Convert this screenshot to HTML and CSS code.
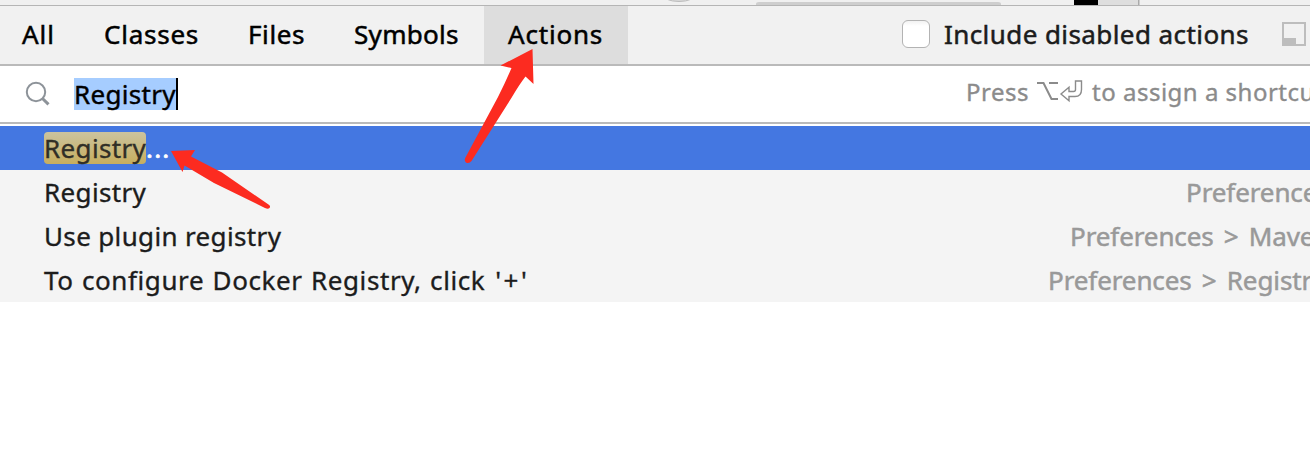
FILE: index.html
```html
<!DOCTYPE html>
<html lang="en">
<head>
<meta charset="utf-8">
<title>Search Everywhere</title>
<link rel="stylesheet" href="styles.css">
</head>
<body>
<div class="window">
  <svg class="backdrop" width="1310" height="5" viewBox="0 0 1310 5">
    <ellipse cx="679" cy="-6" rx="17" ry="7.5" fill="#d8d8d8" stroke="#bcbcbc"/>
    <path d="M756 5V4q0-2 3-2h239q3 0 3 2v1z" fill="#cecece"/>
    <path d="M1098 0h40v5h-40z" fill="#dedede"/>
    <path d="M1138 0h1.5v5h-1.5z" fill="#aaa"/>
    <path d="M1074 0h24v5h-24z" fill="#000"/>
  </svg>
  <header class="tabs">
    <span class="tab tab-all">All</span>
    <span class="tab tab-classes">Classes</span>
    <span class="tab tab-files">Files</span>
    <span class="tab tab-symbols">Symbols</span>
    <span class="tab tab-actions">Actions</span>
    <span class="checkbox"></span>
    <span class="include">Include disabled actions</span>
    <svg class="pin" width="24" height="24" viewBox="0 0 24 24"><path d="M1 1h22v22H1z" fill="none" stroke="#bdbdbd" stroke-width="2"/><path d="M1 16h13v7H1z" fill="#bdbdbd"/></svg>
  </header>
  <div class="search">
    <svg class="lens" width="26" height="26" viewBox="0 0 26 26" fill="none" stroke="#8d9399"><circle cx="11" cy="11" r="9.2" stroke-width="2"/><path d="M17.5 17.5l6 5.8" stroke-width="3"/></svg>
    <span class="query">Registry</span>
    <span class="hint"><span class="hint-press">Press</span><svg class="keys" width="46" height="22" viewBox="0 0 46 22" fill="none" stroke="#8b8b8b"><path d="M0 2h6.500l8 16h6.500M12 2h9" stroke-width="2"/><path d="M38.500 0h6v8.500q0 7-6.500 7h-6v4.300l-8-6.800 8-6.800v4.300h4.500q2 0 2-2z" stroke-width="1.400"/></svg><span>to assign a shortcut</span></span>
  </div>
  <main class="results">
    <div class="row selected"><span class="name"><mark class="match">Registry</mark><span class="dots">...</span></span></div>
    <div class="row"><span class="name short">Registry</span><span class="path path-root">Preferences</span></div>
    <div class="row"><span class="name medium">Use plugin registry</span><span class="path path-maven">Preferences &gt; Maven</span></div>
    <div class="row"><span class="name long">To configure Docker Registry, click <span class="plus">'+'</span></span><span class="path path-registry">Preferences &gt; Registry</span></div>
  </main>
  <svg class="arrows" width="1310" height="462" viewBox="0 0 1310 462" fill="#fc2b20">
    <path d="M532.500 49L533.500 84 525.500 76.500Q519 85 512 97L471.500 161Q469 164 466 162.500 463.500 160 466 156.500L498 97Q506 81 511.500 68L500.500 65.500Z"/>
    <path d="M171 151L195 150 191 156.500 222 172.500 268.500 204.500Q271 206 269.500 208 268 209.500 265 208L214 183 184.500 165.500 182.500 172Z"/>
  </svg>
</div>
</body>
</html>
```
FILE: styles.css
```css
* { box-sizing: border-box; }
body { margin: 0; background: #fff; font-family: "Noto Sans", "Open Sans", sans-serif; font-size: 26px; color: #1c1c1c; }
.window { position: relative; width: 1310px; height: 462px; overflow: hidden; white-space: nowrap; }
.backdrop { display: block; background: #f0f0f0; }
.tabs { height: 61px; display: flex; align-items: stretch; background: #f1f1f1; border-top: 1px solid #b5b5b5; border-bottom: 2px solid #bababa; line-height: 56px; color: #000; -webkit-text-stroke: 0.5px currentColor; }
.tab { flex: none; padding-left: 24px; }
.tab-all { width: 80px; padding-left: 22px; letter-spacing: 1px; }
.tab-classes { width: 144px; letter-spacing: 0.75px; }
.tab-files { width: 105px; letter-spacing: 0.6px; }
.tab-symbols { width: 155px; padding-left: 25px; letter-spacing: 0.3px; }
.tab-actions { width: 144px; letter-spacing: 0.8px; background: #ddd; }
.checkbox { flex: none; width: 28px; height: 28px; margin: 14px 14px 0 274px; border: 1px solid #b3b3b3; border-radius: 6px; background: linear-gradient(#f2f2f2, #fff 5px); }
.include { flex: none; width: 338px; color: #1c1c1c; letter-spacing: 0.42px; }
.pin { flex: none; margin-top: 16px; }
.search { height: 58px; display: flex; align-items: center; border-bottom: 2px solid #bababa; }
.lens { flex: none; margin: 0 23px 1px 25px; }
.query { height: 32px; width: 104px; line-height: 32px; letter-spacing: 0.3px; color: #000; background: #a6cdff; border-right: 2px solid #000; -webkit-text-stroke: 0.4px currentColor; }
.hint { display: flex; align-items: center; margin-left: auto; width: 344px; flex: none; color: #8b8b8b; font-size: 24px; letter-spacing: 0.5px; line-height: 49px; height: 54px; padding-bottom: 5px; -webkit-text-stroke: 0.35px currentColor; }
.hint-press { flex: none; width: 71px; }
.keys { flex: none; margin-right: 9px; overflow: visible; -webkit-text-stroke: 0; }
.results { margin-top: 2px; background: #f4f4f4; }
.row { height: 44px; display: flex; justify-content: space-between; line-height: 44px; padding-left: 44px; -webkit-text-stroke: 0.35px currentColor; }
.selected { background: #4477e1; color: #fff; }
.name { letter-spacing: 0.35px; }
.long { letter-spacing: 0.6px; word-spacing: 1px; }
.plus { margin-left: 1.5px; letter-spacing: 2.5px; }
.selected .name { display: flex; align-items: center; }
.match { height: 32px; width: 102px; line-height: 32px; border-radius: 4px; color: #302e26; background: linear-gradient(#cbc39f, #c7ae5e); }
.dots { letter-spacing: 1.2px; -webkit-text-stroke: 0.7px currentColor; }
.path { flex: none; color: #999; letter-spacing: -0.1px; word-spacing: 3.5px; -webkit-text-stroke: 0.5px currentColor; }
.path-root { width: 124px; }
.path-maven { width: 240px; }
.path-registry { width: 262px; }
.arrows { position: absolute; left: 0; top: 0; }
```
